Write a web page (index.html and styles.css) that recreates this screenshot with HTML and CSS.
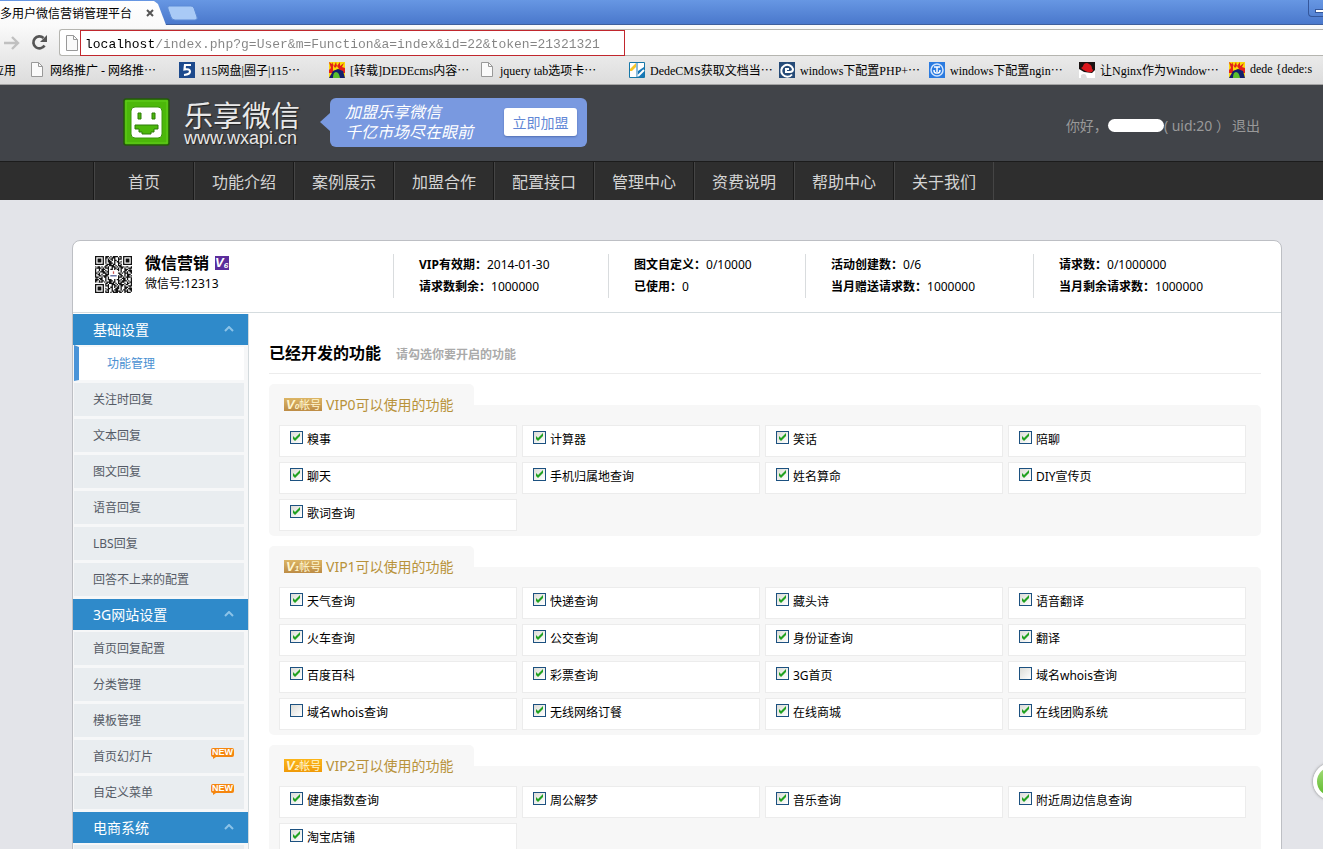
FILE: index.html
```html
<!DOCTYPE html>
<html lang="zh-CN">
<head>
    <meta charset="UTF-8">
    <meta name="viewport" content="width=device-width, initial-scale=1.0">
    <title>多用户微信营销管理平台</title>
    <link rel="stylesheet" href="styles.css">
</head>
<body>
<div class="window">
    <!-- browser bar -->
    <div class="tabstrip">
        <div class="tab">
            <span>多用户微信营销管理平台</span>
            <button class="tab-close" aria-label="关闭"><svg width="8" height="8" viewBox="0 0 8 8"><path d="M1 1l6 6M7 1l-6 6" stroke="#555" stroke-width="2"/></svg></button>
        </div>
        <button class="new-tab" aria-label="新标签页"><svg width="32" height="16" viewBox="0 0 32 16"><path d="M3 1h22q2 0 3 2l3 9q1 3-2 3H9q-3 0-4-3L2 4Q1 1 3 1z" fill="#a9caf6" stroke="#5d8bd6"/></svg></button>
        <button class="minimize" aria-label="最小化"><span></span></button>
    </div>
    <div class="toolbar">
        <div class="address-row">
            <button class="tool" aria-label="前进"><svg width="18" height="16" viewBox="0 0 18 16"><path d="M1 8h14M9 2l6 6-6 6" fill="none" stroke="#c0c0c0" stroke-width="2.4"/></svg></button>
            <button class="tool" aria-label="刷新"><svg width="17" height="17" viewBox="0 0 17 17"><path d="M13.5 11.5A6 6 0 1 1 12.5 4" fill="none" stroke="#555" stroke-width="2.7"/><path d="M16 1v7H9z" fill="#555"/></svg></button>
            <div class="omnibox">
                <svg width="12" height="16" viewBox="0 0 12 16"><path d="M.5.5h7l4 4v11H.5z" fill="#fafafa" stroke="#999"/><path d="M7.500.5v4h4" fill="none" stroke="#999"/></svg>
                <input class="url" type="text" aria-label="地址" value="localhost/index.php?g=User&amp;m=Function&amp;a=index&amp;id=22&amp;token=21321321">
            </div>
        </div>
        <div class="bookmarks">
            <a class="apps" href="#">应用</a>
            <a href="#"><svg class="file" width="12" height="15" viewBox="0 0 12 15"><path d="M.5.5h7l4 4v10H.5z" fill="#fafafa" stroke="#999"/><path d="M7.500.5v4h4" fill="none" stroke="#999"/></svg>网络推广 - 网络推⋯</a>
            <a href="#"><svg width="16" height="16" viewBox="0 0 16 16"><path d="M0 0h16v16H0z" fill="#1d4a8d"/><path d="M12 3H6L5.500 7.500Q11 6.500 11 9.500T5 13" fill="none" stroke="#fff" stroke-width="2.2"/></svg>115网盘|圈子|115⋯</a>
            <a href="#"><svg width="16" height="16" viewBox="0 0 16 16"><path d="M0 0h16v16H0z" fill="#f9d90b"/><path d="M0 0l3 2V0l2 4 2-4 1 4 3-4v4l4-3-2 4 3 1v5H0V8l2-2z" fill="#e3201b"/><path d="M4 3l2 3 2-2 2 3-6 2z" fill="#f9d90b"/><path d="M0 16l4-7 5-2 5 2 2 7z" fill="#11206b"/><path d="M4 16q0-6 3-6t4 6z" fill="#5dc02c"/></svg>[转载]DEDEcms内容⋯</a>
            <a href="#"><svg class="file" width="12" height="15" viewBox="0 0 12 15"><path d="M.5.5h7l4 4v10H.5z" fill="#fafafa" stroke="#999"/><path d="M7.500.5v4h4" fill="none" stroke="#999"/></svg>jquery tab选项卡⋯</a>
            <a href="#"><svg width="16" height="16" viewBox="0 0 16 16"><path d="M.5.5h15v15H.5z" fill="#fff" stroke="#1677a8"/><path d="M1 7l6-6v4L3 9H1z" fill="#f5c52a"/><path d="M9 9l6-4v10H9z" fill="#1677b8"/><path d="M8 1v14" stroke="#1677b8"/><path d="M9 14l6-6" stroke="#fff" stroke-width="2"/></svg>DedeCMS获取文档当⋯</a>
            <a href="#"><svg width="16" height="16" viewBox="0 0 16 16"><path d="M0 0h16v16H0z" fill="#264b78"/><path d="M13 12.500A6 6 0 1 1 14 7q0 3-3 3H7V7h3" fill="none" stroke="#fff" stroke-width="2"/></svg>windows下配置PHP+⋯</a>
            <a href="#"><svg width="16" height="16" viewBox="0 0 16 16"><path d="M0 0h16v16H0z" fill="#2b7be0"/><circle cx="8" cy="8" r="6" fill="none" stroke="#cfe4ff" stroke-width="1.500"/><path d="M5 5h6M8 5v7M5 8q0 3 2 3M11 8q0 3-2 3" fill="none" stroke="#fff" stroke-width="1.500"/></svg>windows下配置ngin⋯</a>
            <a href="#"><svg width="16" height="16" viewBox="0 0 16 16"><path d="M0 0h16v16H0z" fill="#fff"/><path d="M0 0h16v8l-3 3-8-1-5-3z" fill="#1a1212"/><path d="M2 6q2-1 3-4 3-2 5 0 3 1 3 5 2 1 0 3-6 1-11-4z" fill="#d9161c"/><path d="M2 13q3-2 5 0l1 3H2z" fill="#ddd"/></svg>让Nginx作为Window⋯</a>
            <a href="#"><svg width="16" height="16" viewBox="0 0 16 16"><path d="M0 0h16v16H0z" fill="#f9d90b"/><path d="M0 0l3 2V0l2 4 2-4 1 4 3-4v4l4-3-2 4 3 1v5H0V8l2-2z" fill="#e3201b"/><path d="M4 3l2 3 2-2 2 3-6 2z" fill="#f9d90b"/><path d="M0 16l4-7 5-2 5 2 2 7z" fill="#11206b"/><path d="M4 16q0-6 3-6t4 6z" fill="#5dc02c"/></svg>dede {dede:s</a>
        </div>
    </div>

    <!-- site header -->
    <header class="header">
        <a class="logo" href="#">
            <svg width="47" height="48" viewBox="0 0 47 48">
                <rect x="1" y="1" width="45" height="46" rx="2" fill="#4cb80a" stroke="#23590a" stroke-width="1.500"/>
                <rect x="3" y="3" width="41" height="42" fill="none" stroke="#62cf1c"/>
                <rect x="8" y="9" width="31" height="31" rx="4" fill="#fff" stroke="#3a960a"/>
                <path d="M15 15h3v6h-3zM29 15h3v6h-3z" fill="#4cb80a" stroke="#2c7a08"/>
                <path d="M12 27h23v4h-4v3h-3v2h-9v-2h-3v-3h-4z" fill="#4cb80a" stroke="#2c7a08"/>
            </svg>
            <span class="logo-text"><strong>乐享微信</strong><small>www.wxapi.cn</small></span>
        </a>
        <div class="join">
            <p>加盟乐享微信<br>千亿市场尽在眼前</p>
            <button>立即加盟</button>
        </div>
        <div class="user">你好，<span class="username"></span><span>( uid:20 ）</span><a href="#">退出</a></div>
    </header>
    <nav class="nav">
        <a href="#">首页</a>
        <a href="#">功能介绍</a>
        <a href="#">案例展示</a>
        <a href="#">加盟合作</a>
        <a href="#">配置接口</a>
        <a href="#">管理中心</a>
        <a href="#">资费说明</a>
        <a href="#">帮助中心</a>
        <a href="#">关于我们</a>
    </nav>

    <main class="card">
        <div class="info">
            <div class="account">
                <svg width="37" height="37" viewBox="0 0 29 29">
                    <path d="M0 .5H29V1.500H0V2.500H29V3.500H0V4.500H29V5.500H0V6.500H29V7.500H0V8.500H29V9.500H0V10.500H29V11.500H0V12.500H29V13.500H0V14.500H29V15.500H0V16.500H29V17.500H0V18.500H29V19.500H0V20.500H29V21.500H0V22.500H29V23.500H0V24.500H29V25.500H0V26.500H29V27.500H0V28.500H29" fill="none" stroke="#111" stroke-dasharray="1 1 2 1 1 2 3 1 1 1 4 1 2 2 1 1 3 2 1 1 2 1"/>
                    <path d="M0 0h8v8H0zM21 0h8v8h-8zM0 21h8v8H0zM11 11h7v7h-7z" fill="#fff"/>
                    <path d="M.5.5h6v6h-6zM22.500.5h6v6h-6zM.5 22.500h6v6h-6z" fill="none" stroke="#111"/>
                    <path d="M2 2h3v3H2zM24 2h3v3h-3zM2 24h3v3H2z" fill="#111"/>
                    <path d="M12 15h5v1h-5z" fill="#4f5d95"/><path d="M14 12h1v2h-1z" fill="#c55"/>
                </svg>
                <div>
                    <h1>微信营销 <span class="v6">V<sub>6</sub></span></h1>
                    <p>微信号:12313</p>
                </div>
            </div>
            <div class="stat"><p><b>VIP有效期：</b>2014-01-30</p><p><b>请求数剩余：</b>1000000</p></div>
            <div class="stat"><p><b>图文自定义：</b>0/10000</p><p><b>已使用：</b>0</p></div>
            <div class="stat"><p><b>活动创建数：</b>0/6</p><p><b>当月赠送请求数：</b>1000000</p></div>
            <div class="stat"><p><b>请求数：</b>0/1000000</p><p><b>当月剩余请求数：</b>1000000</p></div>
        </div>
        <div class="columns">
            <aside class="sidebar">
                <h2>基础设置<svg width="10" height="6" viewBox="0 0 10 6"><path d="M1 5l4-4 4 4" fill="none" stroke="#8cc3e8" stroke-width="2"/></svg></h2>
                <ul>
                    <li class="active"><a href="#">功能管理</a></li>
                    <li><a href="#">关注时回复</a></li>
                    <li><a href="#">文本回复</a></li>
                    <li><a href="#">图文回复</a></li>
                    <li><a href="#">语音回复</a></li>
                    <li><a href="#">LBS回复</a></li>
                    <li><a href="#">回答不上来的配置</a></li>
                </ul>
                <h2>3G网站设置<svg width="10" height="6" viewBox="0 0 10 6"><path d="M1 5l4-4 4 4" fill="none" stroke="#8cc3e8" stroke-width="2"/></svg></h2>
                <ul>
                    <li><a href="#">首页回复配置</a></li>
                    <li><a href="#">分类管理</a></li>
                    <li><a href="#">模板管理</a></li>
                    <li><a href="#">首页幻灯片</a><span class="new">NEW</span></li>
                    <li><a href="#">自定义菜单</a><span class="new">NEW</span></li>
                </ul>
                <h2>电商系统<svg width="10" height="6" viewBox="0 0 10 6"><path d="M1 5l4-4 4 4" fill="none" stroke="#8cc3e8" stroke-width="2"/></svg></h2>
                <ul>
                    <li></li>
                </ul>
            </aside>
            <section class="content">
                <div class="title">
                    <h2>已经开发的功能</h2>
                    <span>请勾选你要开启的功能</span>
                </div>

                <div class="group">
                    <h3><span class="vip">V<sub>0</sub><i>帐号</i></span>VIP0可以使用的功能</h3>
                    <div class="items">
                        <label><input type="checkbox" checked>糗事</label>
                        <label><input type="checkbox" checked>计算器</label>
                        <label><input type="checkbox" checked>笑话</label>
                        <label><input type="checkbox" checked>陪聊</label>
                        <label><input type="checkbox" checked>聊天</label>
                        <label><input type="checkbox" checked>手机归属地查询</label>
                        <label><input type="checkbox" checked>姓名算命</label>
                        <label><input type="checkbox" checked>DIY宣传页</label>
                        <label><input type="checkbox" checked>歌词查询</label>
                    </div>
                </div>

                <div class="group">
                    <h3><span class="vip">V<sub>1</sub><i>帐号</i></span>VIP1可以使用的功能</h3>
                    <div class="items">
                        <label><input type="checkbox" checked>天气查询</label>
                        <label><input type="checkbox" checked>快递查询</label>
                        <label><input type="checkbox" checked>藏头诗</label>
                        <label><input type="checkbox" checked>语音翻译</label>
                        <label><input type="checkbox" checked>火车查询</label>
                        <label><input type="checkbox" checked>公交查询</label>
                        <label><input type="checkbox" checked>身份证查询</label>
                        <label><input type="checkbox" checked>翻译</label>
                        <label><input type="checkbox" checked>百度百科</label>
                        <label><input type="checkbox" checked>彩票查询</label>
                        <label><input type="checkbox" checked>3G首页</label>
                        <label><input type="checkbox">域名whois查询</label>
                        <label><input type="checkbox">域名whois查询</label>
                        <label><input type="checkbox" checked>无线网络订餐</label>
                        <label><input type="checkbox" checked>在线商城</label>
                        <label><input type="checkbox" checked>在线团购系统</label>
                    </div>
                </div>

                <div class="group">
                    <h3><span class="vip gold">V<sub>2</sub><i>帐号</i></span>VIP2可以使用的功能</h3>
                    <div class="items">
                        <label><input type="checkbox" checked>健康指数查询</label>
                        <label><input type="checkbox" checked>周公解梦</label>
                        <label><input type="checkbox" checked>音乐查询</label>
                        <label><input type="checkbox" checked>附近周边信息查询</label>
                        <label><input type="checkbox" checked>淘宝店铺</label>
                    </div>
                </div>
            </section>
        </div>
    </main>
    <div class="ball"></div>
</div>
</body>
</html>
```
FILE: styles.css
```css
* {
    box-sizing: border-box;
}
body {
    margin: 0;
    font-family: "Noto Sans", "Noto Sans CJK SC", sans-serif;
    font-size: 12px;
    color: #000;
}
h1, h2, h3, p, ul {
    margin: 0;
    padding: 0;
}
ul {
    list-style: none;
}
a {
    color: inherit;
    text-decoration: none;
}
button {
    padding: 0;
    border: none;
    background: none;
    font-family: inherit;
    cursor: pointer;
}
svg {
    flex: none;
    display: block;
}
.window {
    position: relative;
    display: flex;
    flex-direction: column;
    height: 100vh;
    overflow: hidden;
    background: #e3e4e9;
}

/* browser bar */
.tabstrip {
    flex: none;
    display: flex;
    height: 25px;
    background: linear-gradient(#6797e3, #4a78cc);
    border-bottom: 1px solid #3f5f9c;
}
.tab {
    display: flex;
    align-items: center;
    gap: 14px;
    height: 25px;
    padding: 1px 12px 0 0;
    background: linear-gradient(#fff, #fafafa);
    clip-path: polygon(0 1px, calc(100% - 12px) 1px, calc(100% - 8px) 4px, 100% 100%, 0 100%);
}
.new-tab {
    align-self: flex-start;
    margin-top: 5px;
}
.minimize {
    width: 15px;
    height: 17px;
    margin-left: auto;
    padding: 6px 0 0 6px;
    border: 1px solid #35579b;
    border-width: 0 0 1px 1px;
    border-radius: 0 0 0 4px;
}
.minimize span {
    display: block;
    height: 4px;
    background: #fff;
    border: 1px solid #35579b;
    border-right: none;
}
.toolbar {
    flex: none;
    height: 60px;
    padding-top: 4px;
    background: linear-gradient(#fafafa, #dcdcdc);
    border-bottom: 1px solid #a3a3a3;
}
.address-row {
    display: flex;
    align-items: center;
    gap: 10px;
    padding-left: 3px;
}
.tool {
    width: 18px;
}
.omnibox {
    flex: 1;
    display: flex;
    align-items: center;
    gap: 2px;
    height: 27px;
    padding-left: 6px;
    background: #fff;
    border: 1px solid #b5b5b0;
    border-right: none;
    border-radius: 3px 0 0 3px;
}
.url {
    width: 545px;
    height: 26px;
    padding: 3px 4px 0 5px;
    border: none;
    outline: 1px solid #c1272d;
    outline-offset: -1px;
    background: linear-gradient(90deg, #000 75px, #848484 75px);
    background-clip: text;
    -webkit-background-clip: text;
    -webkit-text-fill-color: transparent;
    font-family: "Liberation Mono", monospace;
    font-size: 13px;
}
.bookmarks {
    display: flex;
    height: 27px;
    overflow: hidden;
    font-family: "Liberation Serif", "Noto Sans CJK SC", serif;
}
.bookmarks a {
    flex: none;
    display: flex;
    align-items: center;
    gap: 5px;
    width: 150px;
    white-space: nowrap;
}
.bookmarks .file {
    margin: 0 2px;
}
.bookmarks .apps {
    width: 37px;
    margin-left: -8px;
}

/* site header */
.header {
    flex: none;
    display: flex;
    align-items: center;
    height: 76px;
    padding: 0 63px 2px 123px;
    background: #414449;
}
.logo {
    display: flex;
    align-items: center;
    gap: 14px;
    color: #e8e8e8;
}
.logo-text {
    display: flex;
    flex-direction: column;
    padding-top: 4px;
    text-shadow: 1px 1px 1px #222;
}
.logo-text strong {
    font-size: 29px;
    font-weight: normal;
    line-height: 28px;
}
.logo-text small {
    font-family: "Liberation Sans", Arial, sans-serif;
    font-size: 18px;
    line-height: 16px;
}
.join {
    position: relative;
    display: flex;
    align-items: center;
    justify-content: space-between;
    width: 257px;
    height: 49px;
    margin-left: 30px;
    padding: 0 10px 0 15px;
    background: #7999e0;
    border-radius: 6px;
    color: #fff;
}
.join::before {
    content: "";
    position: absolute;
    left: -10px;
    top: 15px;
    border: solid transparent;
    border-width: 9px 10px 9px 0;
    border-right-color: #7999e0;
}
.join p {
    font-size: 16px;
    font-style: italic;
    line-height: 20px;
}
.join button {
    width: 73px;
    height: 28px;
    background: #fff;
    border-radius: 3px;
    box-shadow: 0 1px 2px #5270b4;
    color: #6287d6;
    font-size: 14px;
}
.user {
    display: flex;
    align-items: center;
    margin-left: auto;
    padding-top: 6px;
    color: #999;
    font-family: "Noto Sans", "Noto Sans CJK TC", sans-serif;
    font-size: 14px;
}
.user a {
    margin-left: 2px;
}
.username {
    width: 56px;
    height: 13px;
    background: #fff;
    border-radius: 7px;
}
.nav {
    flex: none;
    display: flex;
    height: 39px;
    padding-left: 93px;
    background: #2e2e2e;
    border-top: 1px solid #1c1c1c;
}
.nav a {
    width: 100px;
    padding-left: 1px;
    border-left: 1px solid #1a1a1a;
    box-shadow: inset 1px 0 #454545;
    color: #d4d4d4;
    font-size: 16px;
    line-height: 40px;
    text-align: center;
}
.nav a:last-child {
    width: 101px;
    border-right: 1px solid #454545;
}

/* main card */
.card {
    flex: none;
    margin: 40px 41px 0 72px;
    background: #fff;
    border: 1px solid #bdbfc4;
    border-radius: 8px 8px 0 0;
}
.info {
    display: grid;
    grid-template-columns: 320fr 215fr 197fr 228fr 248fr;
    padding: 13px 0 14px;
    border-bottom: 1px solid #d5dcdf;
}
.account {
    display: flex;
    gap: 13px;
    padding: 2px 0 0 22px;
}
.account h1 {
    display: flex;
    align-items: center;
    gap: 6px;
    font-size: 16px;
    line-height: 14px;
}
.account p {
    line-height: 28px;
}
.v6 {
    display: flex;
    width: 14px;
    height: 14px;
    background: #5b2d9c;
    color: #fff;
    font: italic bold 13px/14px "Liberation Sans", Arial, sans-serif;
}
.v6 sub {
    font-size: 8px;
    line-height: 19px;
}
.stat {
    height: 44px;
    padding-left: 25px;
    border-left: 1px solid #d9dcde;
    line-height: 22px;
    white-space: nowrap;
}
.stat b {
    font-family: "Noto Sans", "Noto Sans CJK TC", sans-serif;
}
.columns {
    display: flex;
    padding-top: 1px;
}

/* left menu */
.sidebar {
    flex: none;
    width: 176px;
    background: #f6f7f8;
    border-right: 1px solid #d3dadd;
}
.sidebar h2 {
    display: flex;
    align-items: center;
    justify-content: space-between;
    height: 31px;
    padding: 0 14px 1px 20px;
    background: #2f8aca;
    color: #fff;
    font-size: 14px;
    font-weight: normal;
}
.sidebar ul {
    padding: 0 4px 2px 1px;
}
.sidebar li {
    display: flex;
    justify-content: space-between;
    height: 36px;
    padding: 0 10px 0 19px;
    border-top: 2px solid #f6f7f8;
    border-bottom: 1px solid #f6f7f8;
    background: #e9edf0;
    color: #555b66;
    line-height: 34px;
}
.sidebar .active {
    padding-left: 28px;
    background: #fff;
    border-left: 5px solid #4a94d8;
    color: #4a90d2;
}
.new {
    position: relative;
    width: 23px;
    height: 9px;
    margin-top: 8px;
    background: #f5860f;
    border-radius: 2px;
    color: #fff;
    font: bold 9px/9px "Liberation Sans", Arial, sans-serif;
    text-align: center;
}
.new::after {
    content: "";
    position: absolute;
    left: 2px;
    top: 9px;
    border-top: 2px solid #f5860f;
    border-right: 3px solid transparent;
}

/* feature list */
.content {
    flex: 1;
    padding: 20px 20px 0;
}
.title {
    display: flex;
    align-items: center;
    gap: 15px;
    height: 40px;
    margin-bottom: 10px;
    border-bottom: 1px solid #ececec;
}
.title h2 {
    padding-bottom: 3px;
    font-size: 16px;
}
.title span {
    color: #aaa;
    font-weight: bold;
}
.group {
    margin-bottom: 10px;
}
.group h3 {
    display: flex;
    align-items: center;
    gap: 4px;
    width: 205px;
    height: 21px;
    padding: 20px 0 0 15px;
    background: #f7f7f7;
    border-radius: 5px 5px 0 0;
    color: #b8923a;
    font-size: 14px;
    font-weight: normal;
    line-height: 0;
    white-space: nowrap;
}
.vip {
    display: flex;
    width: 38px;
    height: 13px;
    padding-left: 2px;
    background: linear-gradient(#dcb565, #bd8c45);
    color: #fff6cf;
    font: italic bold 13px/13px "Liberation Sans", Arial, sans-serif;
}
.vip sub {
    font-size: 8px;
    line-height: 18px;
}
.vip i {
    font: 11px/12px "Noto Sans CJK SC", sans-serif;
}
.vip.gold {
    background: linear-gradient(#fbb51a, #f09a08);
}
.items {
    display: grid;
    grid-template-columns: repeat(4, 1fr);
    gap: 5px;
    padding: 20px 15px 5px 10px;
    background: #f7f7f7;
    border-radius: 0 5px 5px 5px;
}
.items label {
    display: flex;
    align-items: flex-start;
    gap: 4px;
    height: 32px;
    padding: 5px 10px;
    background: #fff;
    border: 1px solid #ececec;
    line-height: 18px;
}
.items input {
    flex: none;
    appearance: none;
    width: 13px;
    height: 13px;
    margin: 0;
    border: 1px solid #1c5180;
    background: linear-gradient(135deg, #dcdcd7, #fff);
}
.items input:checked {
    background: url("data:image/svg+xml,%3Csvg xmlns='http://www.w3.org/2000/svg' viewBox='0 0 11 11'%3E%3Cpath d='M2 4v3l2 2 5-5V1L4 6z' fill='%2321a121'/%3E%3C/svg%3E"), linear-gradient(135deg, #dcdcd7, #fff);
}
.ball {
    position: absolute;
    right: -27px;
    top: 763px;
    width: 37px;
    height: 37px;
    border: 4px solid #fff;
    border-radius: 50%;
    background: linear-gradient(#a5dc7c, #5dba2a);
    box-shadow: 0 0 3px #777;
}
```
